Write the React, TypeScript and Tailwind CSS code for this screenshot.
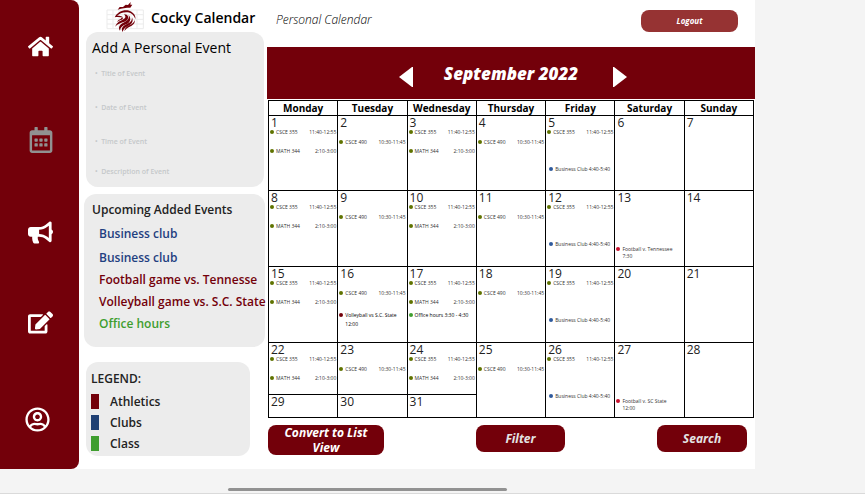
import React from "react";
import { FaBullhorn, FaEdit, FaHome, FaRegCalendarAlt, FaRegUserCircle } from "react-icons/fa";

type CalEvent = { name: string; time?: string; dot: string; place: string; tiny?: boolean };
type Day = { date: number; events: CalEvent[] };

const csce355: CalEvent = { name: "CSCE 355", time: "11:40-12:55", dot: "bg-[#5f7300]", place: "" };
const math344: CalEvent = { name: "MATH 344", time: "2:10-3:00", dot: "bg-[#5f7300]", place: "mt-[9px]" };
const csce490: CalEvent = { name: "CSCE 490", time: "10:30-11:45", dot: "bg-[#5f7300]", place: "mt-[10px]" };
const business: CalEvent = { name: "Business Club 4:40-5:40", dot: "bg-[#2f5a9c]", place: "mt-[27px] ml-[2px]" };
const tennessee: CalEvent = { name: "Football v. Tennessee\n7:30", dot: "bg-[#c8102e]", place: "mt-[42px]" };
const scState: CalEvent = { name: "Football v. SC State\n12:00", dot: "bg-[#c8102e]", place: "mt-[42px]" };
const volleyball: CalEvent = { name: "Volleyball vs S.C. State\n12:00", dot: "bg-[#73000a]", place: "mt-[11px]", tiny: true };
const office: CalEvent = { name: "Office hours 3:30 - 4:30", dot: "bg-[#3f9e2f]", place: "mt-[2px]", tiny: true };

const monday = [csce355, math344];
const weeks: Day[][] = [
  [
    { date: 1, events: monday }, { date: 2, events: [csce490] }, { date: 3, events: monday },
    { date: 4, events: [csce490] }, { date: 5, events: [csce355, business] }, { date: 6, events: [] }, { date: 7, events: [] },
  ],
  [
    { date: 8, events: monday }, { date: 9, events: [csce490] }, { date: 10, events: monday },
    { date: 11, events: [csce490] }, { date: 12, events: [csce355, business] }, { date: 13, events: [tennessee] }, { date: 14, events: [] },
  ],
  [
    { date: 15, events: monday }, { date: 16, events: [csce490, volleyball] }, { date: 17, events: [...monday, office] },
    { date: 18, events: [csce490] }, { date: 19, events: [csce355, business] }, { date: 20, events: [] }, { date: 21, events: [] },
  ],
  [
    { date: 22, events: monday }, { date: 23, events: [csce490] }, { date: 24, events: monday },
    { date: 25, events: [csce490] }, { date: 26, events: [csce355, business] }, { date: 27, events: [scState] }, { date: 28, events: [] },
  ],
];
const rowHeights = ["h-[75px]", "h-[76px]", "h-[76px]", "h-[52px]"];
const lastDays: Day[] = [{ date: 29, events: [] }, { date: 30, events: [] }, { date: 31, events: [] }];
const weekdays = ["Monday", "Tuesday", "Wednesday", "Thursday", "Friday", "Saturday", "Sunday"];

const upcoming = [
  { text: "Business club", color: "text-[#1f4080]", height: "h-6" },
  { text: "Business club", color: "text-[#1f4080]", height: "h-[22px]" },
  { text: "Football game vs. Tennesse", color: "text-[#73000a]", height: "h-[22px]" },
  { text: "Volleyball game vs. S.C. State", color: "text-[#73000a]", height: "h-[22px]" },
  { text: "Office hours", color: "text-[#3f9e2f]", height: "h-6" },
];
const legend = [
  { text: "Athletics", color: "bg-[#73000a]" },
  { text: "Clubs", color: "bg-[#1f4073]" },
  { text: "Class", color: "bg-[#3f9e2f]" },
];
const fields = [
  { name: "Title of Event", height: "h-[34px]" },
  { name: "Date of Event", height: "h-[34px]" },
  { name: "Time of Event", height: "h-[34px]" },
  { name: "Description of Event", height: "h-[26px]" },
];

function Rooster() {
  return (
    <svg viewBox="318 3 114 93" className="h-[31px] w-[38px]" aria-hidden="true">
      <path d="M321 30h109v56H321zM321 44h109M321 58h109M321 72h109M339 30v56M357 30v56M375 30v56M393 30v56M411 30v56" fill="none" stroke="#ebebeb" strokeWidth="3" />
      <g fill="#73000a">
        <path d="M353 29 359 21 369 21 377 14 384 15 392 6 391 14 397 14 391 23C378 23 366 24 353 29z" />
        <path d="M344 52C352 35 372 27 388 32C402 37 408 49 406 57C402 46 395 39 384 37C370 35 358 40 351 48C359 46 365 48 370 53C361 51 353 50 344 52z" />
        <path d="M372 43C384 42 388 53 381 61C373 68 356 68 346 80C349 67 361 62 368 59C377 55 379 50 372 43z" />
        <path d="M386 45C396 58 389 69 378 73C368 77 361 82 360 92C353 82 359 73 370 68C382 63 388 57 386 45z" />
        <path d="M396 52C402 66 393 74 383 79C375 83 370 88 368 96C362 87 367 79 379 73C391 68 396 63 396 52z" />
        <path d="M404 60C406 71 397 77 389 80C381 84 377 88 373 93C375 83 381 79 389 75C397 72 402 68 404 60z" />
        <path d="M364 54 370 55C367 61 358 60 352 66C353 59 360 60 364 54z" />
      </g>
    </svg>
  );
}

function EventRow({ event }: { event: CalEvent }) {
  return (
    <li className={`flex gap-0.5 px-px ${event.place} ${event.tiny ? "leading-[9px] text-black" : "leading-[7px] text-[#333]"}`}>
      <span className={`size-1 shrink-0 rounded-full ${event.tiny ? "mt-0.5" : "mt-px"} ${event.dot}`} />
      <span className="min-h-[10px] whitespace-pre">{event.name}</span>
      {event.time && <span className="ml-auto whitespace-nowrap">{event.time}</span>}
    </li>
  );
}

function DayCell({ day, rowSpan }: { day: Day; rowSpan?: number }) {
  return (
    <td rowSpan={rowSpan} className="border border-black p-0 align-top">
      <div className="h-[13px] pl-[2px] text-[12px] leading-[13px] text-[#222]">{day.date}</div>
      <ul className="text-[5px]">
        {day.events.map((e) => <EventRow key={e.name} event={e} />)}
      </ul>
    </td>
  );
}

export default function App() {
  return (
    <div className="bg-[#f4f4f4] font-['Open_Sans','Noto_Sans',sans-serif] text-black">
      <div className="mr-[110px] flex bg-white">
        <nav aria-label="Main" className="flex w-[79px] shrink-0 flex-col items-center rounded-r-lg bg-[#73000a] pl-0.5 pt-[34px] text-white">
          <a href="#home" aria-label="Home"><FaHome size={25} /></a>
          <a href="#calendar" aria-label="Calendar" className="mt-[68px] text-[#919191]"><FaRegCalendarAlt size={26} /></a>
          <a href="#news" aria-label="Announcements" className="mt-[67px]"><FaBullhorn size={25} /></a>
          <a href="#edit" aria-label="Edit" className="mt-[65px]"><FaEdit size={25} /></a>
          <a href="#profile" aria-label="Profile" className="mr-1.5 mt-[72px]"><FaRegUserCircle size={25} /></a>
        </nav>

        <aside className="flex w-[188px] shrink-0 flex-col pb-[13px] pl-[5px] pr-0.5">
          <header className="flex h-8 items-center gap-[7px] pl-[22px]">
            <Rooster />
            <h1 className="whitespace-nowrap pt-1 text-sm font-semibold">Cocky Calendar</h1>
          </header>
          <form className="ml-0.5 mr-px h-[155px] rounded-xl bg-[#ececec]">
            <h2 className="h-6 whitespace-nowrap pl-1.5 pt-1.5 text-sm leading-5">Add A Personal Event</h2>
            {fields.map((f) => (
              <input key={f.name} aria-label={f.name} placeholder={`•\u2002${f.name}`}
                className={`block w-full rounded-lg pl-[9px] text-[7px] font-semibold outline-none placeholder:text-[#c5c8ca] ${f.height}`} />
            ))}
          </form>
          <section className="mt-[7px] h-[153px] rounded-xl bg-[#ececec] pt-1">
            <h2 className="h-6 pl-2 text-xs font-semibold leading-6 text-[#222]">Upcoming Added Events</h2>
            <ul className="pl-[15px] text-xs font-semibold leading-6">
              {upcoming.map((u, i) => <li key={i} className={`whitespace-nowrap ${u.color} ${u.height}`}>{u.text}</li>)}
            </ul>
          </section>
          <section className="ml-0.5 mr-[15px] mt-[15px] h-[94px] rounded-xl bg-[#ececec] pl-[5px] pt-[5px]">
            <h2 className="h-6 text-xs font-semibold leading-6 text-[#222]">LEGEND:</h2>
            <ul>
              {legend.map((l) => (
                <li key={l.text} className="flex h-[21px] items-center gap-[11px] text-xs font-semibold text-[#222]">
                  <span className={`h-[15px] w-2 ${l.color}`} />{l.text}
                </li>
              ))}
            </ul>
          </section>
        </aside>

        <main className="min-w-0 flex-1">
          <header className="flex h-[47px] items-start justify-between pl-[9px] pr-[17px] pt-[10px]">
            <span className="text-xs font-light italic leading-5">Personal Calendar</span>
            <button type="button" className="h-[22px] w-[97px] rounded-lg bg-[#963333] text-[8px] font-bold italic text-white">Logout</button>
          </header>
          <div className="flex h-[52px] items-center justify-center bg-[#73000a] pl-1 pt-0.5 text-white">
            <button type="button" aria-label="Previous month" className="mt-1.5">
              <svg viewBox="0 0 14 20" className="h-5 w-3.5" fill="currentColor"><path d="M0 10 13 0h1v20h-1z" /></svg>
            </button>
            <h2 className="w-[200px] pr-1 text-center text-[17px] font-extrabold italic">September 2022</h2>
            <button type="button" aria-label="Next month" className="mt-1.5">
              <svg viewBox="0 0 14 20" className="h-5 w-3.5" fill="currentColor"><path d="M14 10 1 0H0v20h1z" /></svg>
            </button>
          </div>
          <div className="pl-px pr-px pt-px">
            <table className="w-full table-fixed border-collapse border border-black">
              <thead>
                <tr className="h-[15px]">
                  {weekdays.map((d) => <th key={d} scope="col" className="border border-black p-0 text-[10px] font-bold leading-[13px]">{d}</th>)}
                </tr>
              </thead>
              <tbody>
                {weeks.map((week, w) => (
                  <tr key={w} className={rowHeights[w]}>
                    {week.map((day, i) => <DayCell key={day.date} day={day} rowSpan={w === 3 && i > 2 ? 2 : undefined} />)}
                  </tr>
                ))}
                <tr className="h-[23px]">
                  {lastDays.map((day) => <DayCell key={day.date} day={day} />)}
                </tr>
              </tbody>
            </table>
          </div>
          <div className="flex items-start justify-between pl-px pr-2 pt-[7px] text-xs font-bold italic leading-[15px] text-white">
            <button type="button" className="h-[30px] w-[116px] rounded-lg bg-[#73000a] px-3">Convert to List View</button>
            <button type="button" className="h-[27px] w-[89px] rounded-lg bg-[#73000a] text-[#e4e4e4]">Filter</button>
            <button type="button" className="h-[27px] w-[90px] rounded-lg bg-[#73000a] text-[#e4e4e4]">Search</button>
          </div>
        </main>
      </div>
      <div className="flex h-[25px] items-end border-b border-[#dadada] pb-0.5 pl-[228px]">
        <div className="h-[3px] w-[279px] rounded-full bg-[#929292]" />
      </div>
      <div className="h-[7px] bg-white" />
    </div>
  );
}
